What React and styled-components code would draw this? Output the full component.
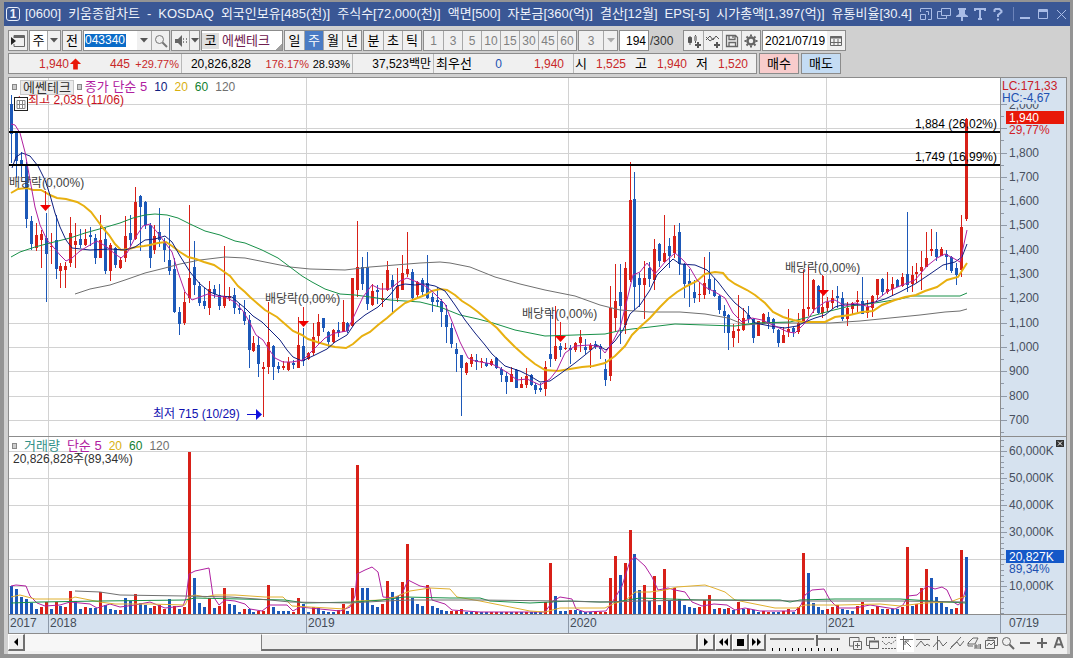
import React from 'react';
import styled, { createGlobalStyle } from 'styled-components';

const GlobalStyle = createGlobalStyle`
  * { box-sizing: border-box; }
  body { margin: 0; background: #8f8f8f; }
  body, button, input, select {
    font-family: 'Liberation Sans', 'Noto Sans CJK KR', sans-serif;
    font-size: 12px;
    line-height: 16px;
  }
`;

const RED = '#d82018';
const BLUE = '#1c58b8';

/* ---------- window shell ---------- */

const Window = styled.main`
  border: solid #949494;
  border-width: 2px 3px 4px 4px;
  background: #d0d0d0;
  overflow: hidden;
`;

const TitleBar = styled.header`
  display: flex;
  align-items: center;
  height: 24px;
  padding: 0 2px;
  background: #3a5795;
  color: #eef2fa;
`;

const ScreenNumber = styled.span`
  flex: none;
  width: 14px;
  height: 14px;
  border: 1px solid #e8eefa;
  border-radius: 3px;
  font-size: 12px;
  font-weight: bold;
  line-height: 12px;
  text-align: center;
`;

const Title = styled.h1`
  display: flex;
  flex: 1;
  gap: 7px;
  min-width: 0;
  margin: 0 0 0 5px;
  font-size: 13px;
  font-weight: normal;
  line-height: 20px;
  white-space: nowrap;
  overflow: hidden;
`;

const TitleButtons = styled.div`
  display: flex;
  flex: none;
  align-items: center;
  gap: 4px;
`;

const TitleButton = styled.button`
  display: flex;
  align-items: center;
  justify-content: center;
  width: 14px;
  height: 18px;
  padding: 0;
  border: 0;
  background: none;
  color: #a9bce6;
`;

const TitleDivider = styled.span`
  width: 1px;
  height: 14px;
  margin-left: 4px;
  background: #6d84ba;
`;

/* ---------- toolbar ---------- */

const Toolbar = styled.div`
  display: flex;
  align-items: center;
  gap: 1px;
  padding: 4px 4px 0;
`;

const Group = styled.div`
  display: flex;
  flex: none;
  height: 21px;
  border: 1px solid #8c8c8c;
  background: #f0f0f0;
`;

const Tool = styled.button`
  display: flex;
  align-items: center;
  justify-content: center;
  width: ${(p) => p.$width || 19}px;
  padding: 0;
  border: 0;
  background: ${(p) => (p.$active ? '#4a7bc4' : p.$white ? '#fff' : '#f0f0f0')};
  color: ${(p) => (p.$active ? '#fff' : p.$muted ? '#808080' : '#000')};
  font-size: ${(p) => (p.$muted ? 12 : 13)}px;

  & + & {
    border-left: 1px solid #a8a8a8;
  }
`;

const Field = styled.input`
  width: ${(p) => p.$width}px;
  padding: 0 2px;
  border: 0;
  outline: 0;
  background: #fff;
  color: #000;
  text-align: ${(p) => p.$align || 'left'};
`;

const CodeBox = styled.div`
  display: flex;
  align-items: center;
  width: 53px;
  background: #fff;
`;

const CodeField = styled.input`
  width: 41px;
  height: 13px;
  margin-left: 1px;
  padding: 0;
  border: 0;
  outline: 0;
  background: #0a6cc8;
  color: #fff;
  line-height: 13px;
`;

const StockName = styled.div`
  display: flex;
  align-items: center;
  width: 80px;
  background: linear-gradient(135deg, #fff 0 93%, #a0a0a0 93%);
  color: #702050;
  font-size: 13px;
`;

const Market = styled.span`
  width: 17px;
  margin-right: 3px;
  background: #dedede;
  color: #000;
  text-align: center;
`;

const BarTotal = styled.span`
  width: 32px;
  color: #333;
`;

/* ---------- quote line ---------- */

const QuoteRow = styled(Toolbar)`
  gap: 2px;
  padding: 2px 4px 0;
`;

const QuoteGroup = styled(Group)`
  width: 749px;
`;

const QuoteCell = styled.div`
  display: flex;
  align-items: center;
  width: ${(p) => p.$width}px;
  padding-right: 2px;

  & + & {
    border-left: 1px solid #b8b8b8;
  }
`;

const Figure = styled.span`
  flex: none;
  width: ${(p) => p.$width}px;
  color: ${(p) => p.$color || '#000'};
  font-size: ${(p) => (p.$percent ? 11 : 12)}px;
  text-align: right;
  white-space: nowrap;
`;

const QuoteLabel = styled.span`
  flex: none;
  width: ${(p) => p.$width}px;
  padding-left: ${(p) => p.$inset || 2}px;
  font-size: 13px;
`;

const OrderButton = styled.button`
  width: 40px;
  height: 21px;
  padding: 0;
  border: 1px solid #8c8c8c;
  background: ${(p) => (p.$sell ? '#c4dcf4' : '#f8cccc')};
  color: #000;
  font-size: 13px;
`;

/* ---------- chart ---------- */

const ChartFrame = styled.section`
  margin: 3px 3px 0 4px;
  border: 1px solid #8c8c8c;
  background: #fff;
`;

const ChartPanel = styled.div`
  display: grid;
  grid-template-columns: minmax(0, 1fr) 65px;
  height: ${(p) => p.$height}px;
  border-bottom: 1px solid #8c8c8c;
`;

const Plot = styled.div`
  position: relative;
  overflow: hidden;
  border-right: 1px solid #8c8c8c;

  > svg { display: block; width: 100%; height: 100%; }
`;

const Axis = styled.div`
  position: relative;
  overflow: hidden;
  background: #d6e2ef;

  > svg { display: block; }
`;

const Legend = styled.div`
  position: absolute;
  top: 1px;
  left: 3px;
  display: flex;
  align-items: center;
  gap: 7px;
`;

const LegendHead = styled.div`
  display: flex;
  align-items: center;
  gap: 3px;
`;

const LegendItem = styled.span`
  color: ${(p) => p.$color};
  font-size: ${(p) => p.$size || 12}px;
  line-height: 16px;
  white-space: nowrap;
`;

const LegendBox = styled.span`
  width: 5px;
  height: 6px;
  border: 1px solid #888;
  background: #ccc;
`;

const StockTag = styled.span`
  height: 15px;
  padding: 0 2px;
  border: 1px solid #c8c8c8;
  background: #ebebeb;
  color: #333;
  font-size: 13px;
  line-height: 13px;
`;

const ClosePanel = styled.button`
  position: absolute;
  top: 3px;
  right: 2px;
  width: 8px;
  height: 7px;
  padding: 0;
  border: 0;
  background: #333;

  svg { display: block; }
`;

const TimeAxis = styled.div`
  display: grid;
  grid-template-columns: 40px 258px 262px 258px minmax(0, 1fr) 65px;
  height: 18px;
  background: #d6e2ef;
  color: #444c58;
`;

const Year = styled.span`
  padding-left: ${(p) => p.$inset || 1}px;
  border-right: ${(p) => (p.$last ? 0 : 1)}px solid #8c98a8;
`;

/* ---------- footer ---------- */

const Footer = styled.footer`
  display: flex;
  height: 20px;
  margin: 0 3px 0 4px;
  background: #f0f0f0;
`;

const ScrollButton = styled.button`
  display: flex;
  flex: none;
  align-items: center;
  justify-content: center;
  width: 17px;
  height: 17px;
  padding: 0;
  border: solid;
  border-width: 1px 2px 2px 1px;
  border-color: #fff #707070 #707070 #fff;
  background: #f0f0f0;
`;

const Track = styled.div`
  flex: 1;
  display: flex;
  justify-content: flex-end;
  height: 17px;
  background: #f7f7f7;
`;

const Thumb = styled.div`
  width: 65%;
  border: solid;
  border-width: 1px 2px 2px 1px;
  border-color: #fff #707070 #707070 #808080;
  background: #eee;
`;

const SpeedControl = styled.div`
  flex: none;
  width: 72px;
  margin: 0 4px;

  svg { display: block; }
`;

const Speed = styled.input`
  appearance: none;
  display: block;
  width: 70px;
  height: 12px;
  margin: 0;
  background: linear-gradient(#808080, #808080) 0 4px / 100% 2px no-repeat;

  &::-webkit-slider-thumb {
    appearance: none;
    width: 4px;
    height: 11px;
    border-right: 2px solid #666;
    background: #f0f0f0;
  }
`;

const FooterTool = styled.button`
  display: flex;
  flex: none;
  align-items: center;
  justify-content: center;
  width: 17px;
  height: 18px;
  padding: 0;
  border: 0;
  background: ${(p) => (p.$active ? '#fff' : 'none')};
  color: #666;
`;

/* ---------- icons ---------- */

const Icon = ({ size = 14, children, ...rest }) => (
  <svg width={size} height={size} viewBox="0 0 14 14" fill="none" stroke="currentColor" strokeWidth="1" {...rest}>
    {children}
  </svg>
);

const DownArrow = ({ color = '#555' }) => (
  <svg width="8" height="5" viewBox="0 0 8 5"><path d="M0 0h8L4 4.500z" fill={color} /></svg>
);

const titleIcons = [
  ['화면 축소', <Icon><path d="M1.500 5V1.500h11v11H9" /><path d="M1.500 7.500h5v5h-5zM7 4.500h2.500V8" /></Icon>],
  ['화면 복사', <Icon><path d="M4.500 1.500h9v7h-9zM4 4.500H.500v7h9V9" /></Icon>],
  ['고정', <Icon fill="currentColor" stroke="none"><path d="M3 1h8v2h-1v4l3 2v1H8v4H6v-4H1V9l3-2V3H3z" /></Icon>],
  ['글꼴', <Icon strokeWidth="2"><path d="M2 4V2h10v2M7 2v10M5 12h4" /></Icon>],
  ['도움말', <Icon strokeWidth="2"><path d="M3.500 5V3l1-1h4l2 2v1L7 8v2M7 11.500v2" /></Icon>],
];

const windowIcons = [
  ['최소화', <Icon strokeWidth="2"><path d="M2 11h10" /></Icon>],
  ['최대화', <Icon><path d="M2.500 2.500h9v9h-9z" /><path d="M2 4h10" strokeWidth="2" /></Icon>],
  ['닫기', <Icon><path d="M3 3l9 9M12 3l-9 9" /></Icon>],
];

const chartIcons = [
  ['차트 추가', <Icon stroke="#555"><path d="M3 2v9M8.500 1v8" /><path d="M1.500 3.500h3v5h-3z" fill="#555" /><path d="M7.500 2.500h2v4h-2z" fill="#999" stroke="#999" /><path d="M8 11h6M11 8v6" strokeWidth="2" /></Icon>],
  ['지표 추가', <Icon stroke="#555"><path d="M0 6l4-4 3 4 3-4 3 3M0 3l4 4 4-3" /><path d="M8 11h6M11 8v6" strokeWidth="2" /></Icon>],
  ['저장', <Icon stroke="#666" strokeWidth="1.300"><path d="M1.500 1.500h9l2 2v9h-11zM4 1.500v4h6v-4M4 12.500v-4h6.500v4M8 2v2" /></Icon>],
  ['설정', <Icon stroke="#666"><circle cx="7" cy="7" r="3.500" strokeWidth="2.500" /><path d="M7 .500v2M7 11.500v2M.500 7h2M11.500 7h2M2.500 2.500l1.500 1.500M10 10l1.500 1.500M11.500 2.500L10 4M4 10l-1.500 1.500" strokeWidth="2" /></Icon>],
];

const footerIcons = [
  ['창 추가', <Icon><path d="M11 5V1.500H1.500V10H5M5.500 5.500h8v8h-8zM9.500 7v5M7 9.500h5" /></Icon>],
  ['창 겹치기', <Icon><path d="M9.500 4V1.500h-8v8H4M4.500 5.500h9v7h-9z" /><path d="M4 5.500h10" strokeWidth="2" /></Icon>],
  ['지표선', <Icon><path d="M0 1.500h14M0 12.500h14" strokeDasharray="2 1" /><path d="M0 5l4 4 3-3 2 2 5-4" strokeDasharray="2 1" /></Icon>],
  ['선택', <Icon><path d="M4.500 0v14M1 3.500h13M6 5l6 6M6 9V5h4" /></Icon>, true],
  ['수평선', <Icon><path d="M0 3.500h14M0 11l5-6 4 5 2-2 3 2" /></Icon>],
  ['수직선', <Icon><path d="M4.500 0v14M0 11l6-7 4 6 4-4" /></Icon>],
  ['추세선', <Icon><path d="M0 13L11 1M1 11l6-5 3 4 4-5" /></Icon>],
  ['전체 지우기', <Icon><path d="M1 7l5-5h5L8 8H2zM1 7v3h5M8 13V9h2v4M8 11h2M12 8v5M13.500 8v5" /></Icon>],
  ['차트 저장', <Icon><path d="M4 4V1.500h9.500v8H11M1.500 4.500h9v8h-9zM3 10l2-3 2 2 3-3M5 3l2-1 2 1 3-1" /></Icon>],
  ['돋보기', <Icon><circle cx="5.500" cy="5.500" r="4" /><path d="M8.500 8.500l4.500 4.500" strokeWidth="2" /></Icon>],
  ['축소', <Icon strokeWidth="2"><path d="M2 7h10" /></Icon>],
  ['확대', <Icon strokeWidth="2"><path d="M2 7h10M7 2v10" /></Icon>],
  ['글자', <Icon strokeWidth="2"><path d="M2.500 12L6 2h1.500L11 12M4 8.500h6" /></Icon>],
];

/* ---------- chart data ---------- */

/* Weekly candles: high, body top, body bottom, low, direction (1 up, 0 down). */
const candles = [
  [95,104,134,163,0],[132,132,161,178,0],[152,160,165,177,0],[162,164,219,228,0],[216,221,244,250,0],[223,235,248,251,1],[230,234,240,268,1],[213,238,254,302,0],[233,246,247,264,1],[215,240,269,279,0],
  [263,266,271,288,1],[262,266,270,288,1],[217,233,263,267,1],[223,241,245,268,1],[229,239,245,248,0],[229,239,245,246,1],[227,235,237,246,0],[234,238,258,264,0],[215,240,258,258,1],[228,239,271,274,0],
  [243,245,271,281,1],[247,248,265,268,0],[257,260,268,269,1],[216,236,258,262,1],[215,233,240,247,0],[187,202,239,240,1],[195,196,207,251,0],[201,202,225,229,0],[223,225,258,268,0],[225,236,250,254,1],
  [208,232,240,247,0],[238,242,250,262,0],[218,260,271,275,0],[258,269,312,313,0],[307,312,324,335,0],[292,302,323,325,1],[205,278,298,303,1],[241,267,285,295,0],[282,286,303,306,0],[288,301,306,309,0],
  [281,289,308,315,1],[285,289,294,298,0],[284,295,306,310,0],[246,296,306,308,1],[287,296,298,301,1],[288,295,308,314,0],[303,308,310,314,0],[300,312,321,325,0],[315,320,350,368,0],[336,343,351,352,1],
  [336,345,364,377,0],[362,367,369,417,1],[302,342,367,374,1],[345,346,367,380,0],[362,366,369,373,0],[361,366,368,370,1],[357,362,370,371,1],[360,363,365,369,0],[317,345,368,368,1],[328,346,361,366,0],
  [352,353,359,360,1],[323,337,353,356,1],[314,322,336,344,1],[318,318,328,332,0],[331,332,342,347,0],[329,330,342,343,1],[322,330,333,337,0],[300,322,332,332,1],[322,323,331,333,0],[278,278,326,327,1],
  [221,267,290,297,1],[257,267,284,290,0],[252,267,304,310,0],[284,291,305,306,1],[285,290,292,304,0],[283,298,300,307,1],[261,270,290,291,1],[275,280,287,312,0],[268,286,298,302,1],[255,273,290,290,1],
  [232,269,274,277,1],[269,272,298,302,0],[281,282,295,298,1],[278,280,292,295,0],[255,283,298,299,0],[293,297,302,312,0],[287,300,302,307,0],[299,301,312,327,0],[305,315,327,343,0],[323,328,344,348,0],
  [343,349,354,372,0],[355,355,368,416,0],[362,363,373,375,1],[354,357,364,367,1],[354,360,362,370,0],[358,361,362,368,1],[358,363,366,367,0],[359,361,365,366,1],[357,358,368,369,0],[367,369,375,382,0],
  [372,376,382,394,0],[367,374,382,382,1],[369,370,388,388,0],[377,384,388,388,1],[368,376,385,388,1],[374,375,385,386,0],[383,385,390,394,0],[383,388,390,392,0],[361,367,389,396,1],[310,354,359,367,0],
  [306,346,359,361,1],[343,346,350,357,0],[343,348,349,350,1],[345,348,350,364,0],[342,343,350,352,1],[330,337,343,352,1],[339,347,350,354,0],[343,345,350,368,1],[341,344,347,349,0],[344,346,349,359,0],
  [359,369,380,386,0],[286,308,376,381,1],[264,301,318,331,1],[264,292,306,344,0],[262,268,325,334,1],[162,200,280,282,1],[172,199,287,310,0],[273,278,285,307,0],[261,278,285,319,1],[262,268,279,287,0],
  [239,249,280,290,1],[243,244,261,267,0],[215,253,262,263,1],[238,246,256,268,0],[225,236,253,258,1],[223,232,264,275,0],[263,264,284,298,0],[269,281,284,307,0],[280,292,298,303,0],[282,294,295,302,1],
  [257,283,295,299,1],[252,279,290,294,0],[278,290,296,297,0],[295,296,310,314,0],[305,311,316,333,0],[314,315,333,350,0],[324,331,338,347,1],[295,329,331,343,1],[308,318,330,331,1],[306,315,319,323,0],
  [318,319,338,343,0],[321,321,336,336,1],[313,314,324,324,1],[312,317,324,329,0],[318,319,329,333,0],[329,330,343,347,0],[327,335,343,343,1],[309,329,332,337,1],[327,328,332,337,0],[313,323,332,334,1],
  [270,309,323,323,1],[267,307,309,316,1],[279,280,309,313,1],[285,286,313,314,0],[275,307,313,318,1],[297,302,308,312,1],[290,298,303,309,1],[286,296,298,308,0],[292,298,319,321,0],[302,308,319,326,1],
  [302,303,309,314,1],[291,300,302,312,1],[277,301,314,314,0],[300,307,313,318,1],[295,296,308,317,1],[279,279,295,299,1],[278,279,292,296,0],[272,289,292,294,1],[277,284,289,296,1],[279,280,287,287,0],
  [273,277,286,287,1],[212,274,285,292,0],[266,275,284,292,1],[263,272,274,283,1],[251,267,271,290,1],[232,258,267,267,1],[229,249,251,256,1],[232,249,257,261,0],[247,249,256,256,1],[250,254,257,270,0],
  [256,257,271,273,0],[263,268,275,285,0],[215,227,270,277,1],[118,119,219,221,1],
];

/* Top of each volume bar; every bar stands on 614. Negative marks a falling week. */
const volumes = [
  -586,-589,-597,-599,-603,-609,607,602,-609,602,-606,607,591,-601,-609,607,-608,-608,592,-605,-609,-610,610,-598,-601,594,-603,-605,-608,606,
  605,609,-599,606,-609,607,452,-578,-603,-607,598,-608,606,588,-604,-605,-612,609,-609,-612,611,611,585,-607,-611,-611,-611,612,598,-604,
  -612,607,-608,-611,-612,-612,610,604,-611,588,465,-588,-588,-605,-607,604,581,-592,-596,582,544,-598,-604,-606,585,-606,-608,-610,-611,611,
  611,609,-612,-612,612,-612,-612,612,612,-612,612,-612,612,-612,612,-612,-612,-612,602,563,-596,-611,-611,610,-610,-611,-612,-612,612,612,
  612,578,556,-575,563,530,-554,-590,585,-601,576,-605,569,-600,588,-599,-605,-607,-608,607,600,595,-609,608,-609,608,-610,602,-609,609,
  -610,-612,611,612,-612,-612,611,609,-612,607,553,-573,-603,-607,-610,609,607,605,-609,-610,-611,606,602,-610,609,606,-609,609,-609,-609,
  607,547,-606,604,588,569,-578,-597,-602,-607,-609,608,550,-557,
].map((v) => [Math.abs(v), v > 0]);

const priceLines = [
  { color: '#707070', width: 1, points: '75,294 90,289 110,285 125,280 145,273 165,268 180,264 200,260 225,257 245,258 265,262 290,267 310,269 345,270 370,267 395,265 420,263 440,262 450,263 470,267 485,273 495,277 520,284 545,290 575,296 600,305 620,310 650,312 680,312 705,314 728,318 745,325 770,323 800,323 830,323 860,321 890,318 920,315 945,312 960,311 967,309' },
  { color: '#189048', width: 1, points: '11,257 20,252 35,247 50,243 70,238 85,233 103,228 120,223 133,218 145,215 155,214 167,215 178,218 190,224 205,231 220,235 235,241 245,243 262,250 278,258 290,267 302,276 312,282 325,289 340,294 355,295 370,297 390,300 420,302 440,307 460,315 478,319 493,323 515,330 545,336 575,335 605,334 618,331 632,329 650,327 675,324 705,325 735,326 755,323 790,322 805,318 830,311 850,306 875,303 900,299 912,296 930,296 960,296 967,293' },
  { color: '#e8b010', width: 2, points: '11,193 18,189 27,188 33,190 41,190 50,195 57,198 66,199 77,202 84,206 91,212 97,220 103,228 109,235 115,244 121,250 129,249 136,247 144,246 150,245 158,243 166,242 172,246 180,252 188,257 196,259 204,262 214,265 223,271 230,276 238,286 245,292 250,297 258,304 265,310 277,317 285,324 293,331 302,335 308,339 317,342 327,345 335,347 346,348 353,344 362,336 370,332 378,325 387,318 395,311 405,303 415,299 425,295 432,291 440,289 447,290 455,295 462,301 470,306 478,312 485,318 491,323 497,328 505,337 515,347 525,356 535,364 545,370 558,371 570,369 582,367 593,366 605,363 615,356 625,346 632,335 640,327 650,318 660,307 668,299 677,292 687,286 697,281 705,274 715,272 723,273 728,279 735,284 747,290 755,295 765,303 773,312 783,317 793,320 803,322 825,322 835,317 850,315 862,312 873,311 882,305 895,300 905,297 916,295 925,291 937,287 947,280 958,277 967,263' },
  { color: '#102080', width: 1, points: '12,168 16,157 22,153 30,156 38,166 45,180 50,195 55,213 60,227 66,240 72,248 90,250 110,249 125,250 135,247 145,240 155,239 165,236 172,242 180,256 190,272 200,284 210,292 220,296 232,297 240,304 245,308 253,316 262,322 270,330 280,340 287,350 293,357 302,361 315,355 327,349 335,342 347,335 355,323 365,315 378,307 390,295 397,286 405,284 415,285 425,284 435,286 445,291 455,305 465,320 475,333 485,345 492,354 505,366 520,371 530,376 540,382 550,381 560,374 575,363 585,355 597,345 606,350 615,341 623,330 630,314 640,305 650,290 657,275 668,264 673,259 680,264 695,265 707,270 718,282 728,295 735,303 745,311 755,323 770,326 785,328 797,326 805,322 815,318 825,315 835,307 845,304 860,305 875,302 885,299 900,292 915,284 930,274 943,265 955,262 962,257 967,244' },
  { color: '#b020a0', width: 1, points: '11,124 15,125 20,133 25,152 30,180 35,207 40,225 47,240 55,249 60,255 66,261 72,258 80,251 90,245 97,241 107,247 115,254 121,258 127,253 135,238 143,226 150,224 157,232 163,240 172,252 178,272 185,292 192,300 200,297 208,294 215,296 225,297 235,302 243,311 250,323 256,335 263,340 268,348 275,358 283,362 292,362 303,360 313,350 325,338 335,333 347,331 355,314 363,297 372,285 380,289 390,289 400,281 407,278 417,282 427,287 435,294 445,304 453,324 460,342 468,358 475,361 492,364 500,368 508,373 517,380 527,379 540,385 550,379 557,370 565,353 575,346 590,345 600,347 605,353 612,343 620,328 627,300 633,275 640,272 647,263 655,274 665,262 675,253 683,260 690,268 697,280 705,287 715,292 725,298 733,313 742,322 752,318 762,320 775,326 788,332 795,333 805,323 815,309 825,302 835,300 845,306 855,303 870,307 878,299 888,291 900,286 915,280 927,266 937,258 945,254 953,258 960,262 967,230' },
];

const volumeLines = [
  { color: '#b020a0', width: 1, points: '11,586 16,585 26,586 30,596 37,603 45,606 60,605 70,602 80,603 90,604 97,608 110,604 120,607 135,605 150,602 165,608 183,606 186,598 189,574 195,571 209,568 213,596 219,605 225,600 235,601 245,604 250,609 262,611 270,605 287,605 293,611 300,607 320,609 340,611 350,607 355,596 357,574 365,570 372,567 378,572 383,597 395,598 402,594 408,580 420,586 430,588 432,600 445,604 452,610 480,612 545,612 553,601 560,597 572,599 576,609 585,612 606,611 615,598 622,586 630,561 635,557 645,566 652,577 658,590 668,588 675,590 685,592 692,602 702,606 714,604 727,605 735,610 745,608 760,611 795,611 801,605 805,595 812,590 824,589 830,600 838,608 855,608 870,605 895,609 903,605 908,596 917,595 927,586 935,589 942,587 947,590 952,601 958,605 962,602 966,588' },
  { color: '#e0b030', width: 1, points: '11,597 20,595 35,599 70,599 75,597 100,602 115,604 150,604 185,605 189,597 195,595 205,597 215,595 235,595 265,597 283,597 292,606 310,607 345,609 355,601 382,600 395,597 410,591 430,588 450,589 457,597 480,601 505,606 530,611 545,612 560,608 605,608 615,603 625,601 635,592 650,592 665,590 677,587 705,585 714,588 725,592 735,600 750,603 775,608 797,608 805,605 840,605 880,604 900,606 925,603 950,602 966,596' },
  { color: '#189048', width: 1, points: '11,603 40,602 100,601 185,600 195,598 240,599 285,600 305,603 355,602 382,600 405,597 450,598 480,598 490,601 530,603 570,601 600,602 615,602 640,598 700,600 780,600 790,602 800,600 835,599 900,599 930,601 966,603' },
  { color: '#707070', width: 1, points: '75,591 100,592 120,595 185,596 230,597 270,600 290,602 350,603 385,601 410,600 480,600 560,601 600,602 640,601 700,600 800,601 900,601 966,602' },
];

const dividends = [
  { x: 45, textX: 9, y: 187, arrow: 210 },
  { x: 303, textX: 265, y: 303, arrow: 326 },
  { x: 560, textX: 522, y: 318, arrow: 341 },
  { x: 823, textX: 785, y: 272, arrow: 295 },
];

const supports = [
  { y: 131, label: '1,884 (26,02%)' },
  { y: 164, label: '1,749 (16,99%)' },
];

const priceGrid = [104, 128, 153, 177, 201, 225, 250, 274, 298, 323, 347, 371, 396, 420];
const volumeGrid = [451, 478, 505, 532, 559, 586];
const yearX = [48, 306, 568, 826];
const weekX = (i) => Math.round(11 + i * 4.948);

const Grid = ({ rows }) => (
  <g stroke="#d2d2d2" shapeRendering="crispEdges">
    {rows.map((y) => <line key={y} x1="0" x2="102%" y1={y + 0.5} y2={y + 0.5} />)}
    {yearX.map((x) => <line key={x} x1={x + 0.5} x2={x + 0.5} y1="0" y2="640" />)}
  </g>
);

const Averages = ({ lines }) =>
  lines.map((l) => (
    <polyline key={l.color} points={l.points} fill="none" stroke={l.color} strokeWidth={l.width} />
  ));

function PriceChart() {
  return (
    <svg role="img" aria-label="주가 차트" fontSize="12">
      <g transform="translate(-9 -78)">
        <Grid rows={priceGrid} />
        <g shapeRendering="crispEdges">
          {candles.map(([high, top, bottom, low, up], i) => (
            <g key={i} fill={up ? RED : BLUE}>
              <rect x={weekX(i)} y={high} width="1" height={low - high} />
              <rect x={weekX(i) - 1} y={top} width="3" height={Math.max(bottom - top, 1)} />
            </g>
          ))}
        </g>
        <Averages lines={priceLines} />
        {supports.map((s) => (
          <g key={s.y}>
            <rect x="9" y={s.y} width="991" height="2" />
            <text x="997" y={s.y - 3} textAnchor="end">{s.label}</text>
          </g>
        ))}
        {dividends.map((d) => (
          <g key={d.x}>
            <path d={`M${d.x + 0.5} ${d.arrow - 19}v14`} stroke="#e02020" />
            <path d={`M${d.x - 5} ${d.arrow - 5}h11l-5.500 6z`} fill="#f00000" />
            <text x={d.textX} y={d.y} fill="#404040">배당락(0,00%)</text>
          </g>
        ))}
        <path d="M15 99l5-3v6z" fill="#d01020" />
        <text x="28" y="104" fill="#c81020">최고 2,035 (11/06)</text>
        <path d="M247 414.500h9" stroke="#1010d0" />
        <path d="M256 409v11l6-5.500z" fill="#1010e0" />
        <text x="153" y="418" fill="#1010b0">최저 715 (10/29)</text>
        <g stroke="#222" fill="#fff">
          <rect x="14.500" y="97.500" width="13" height="13" />
          <path d="M17 100.500h8v8h-8zM17 104.500h8M19.500 101v7M22.500 101v7" stroke="#888" />
        </g>
      </g>
    </svg>
  );
}

function PriceAxis() {
  return (
    <svg width="65" height="358" fontSize="12" fill="#485060">
      <g transform="translate(-1002 -78)">
        {priceGrid.map((y, i) => (
          <g key={y}>
            <path d={`M1002 ${y + 0.5}h6M1002 ${y + 12.5}h3`} stroke="#909aa8" />
            {i !== 1 && <text x="1010" y={y + (i ? 4 : 5)}>{(2000 - i * 100).toLocaleString('en-US')}</text>}
          </g>
        ))}
        <rect x="1002" y="79" width="64" height="25" fill="#d6e2ef" />
        <text x="1003" y="90" fill="#c82028">LC:171,33</text>
        <text x="1003" y="102" fill="#2050b0">HC:-4,67</text>
        <rect x="1007" y="111" width="58" height="13" fill="#e81808" />
        <text x="1010" y="122" fill="#fff">1,940</text>
        <text x="1010" y="134" fill="#d02028">29,77%</text>
      </g>
    </svg>
  );
}

function VolumeChart() {
  return (
    <svg role="img" aria-label="거래량 차트" fontSize="12">
      <g transform="translate(-9 -437)">
        <Grid rows={volumeGrid} />
        <g shapeRendering="crispEdges">
          {volumes.map(([top, up], i) => (
            <rect key={i} x={weekX(i) - 1} y={top} width="3" height={614 - top} fill={up ? RED : BLUE} />
          ))}
        </g>
        <Averages lines={volumeLines} />
        <text x="13" y="463" fill="#303030">20,826,828주(89,34%)</text>
      </g>
    </svg>
  );
}

function VolumeAxis() {
  const ticks = Array.from({ length: 33 }, (_, i) => 613 - i * 5.4);
  return (
    <svg width="65" height="177" fontSize="12" fill="#485060">
      <g transform="translate(-1002 -437)">
        {ticks.map((y) => <path key={y} d={`M1002 ${Math.round(y) + 0.5}h3`} stroke="#909aa8" />)}
        {volumeGrid.map((y, i) => (
          <g key={y}>
            <path d={`M1002 ${y + 0.5}h6`} stroke="#909aa8" />
            {i !== 4 && <text x="1010" y={y + 4}>{60 - i * 10},000K</text>}
          </g>
        ))}
        <rect x="1007" y="550" width="58" height="13" fill="#1458c8" />
        <text x="1010" y="561" fill="#fff">20,827K</text>
        <text x="1010" y="573" fill="#2050b0">89,34%</text>
      </g>
    </svg>
  );
}

const titleParts = [
  '[0600]', '키움종합차트', '-', 'KOSDAQ', '외국인보유[485(천)]', '주식수[72,000(천)]', '액면[500]',
  '자본금[360(억)]', '결산[12월]', 'EPS[-5]', '시가총액[1,397(억)]', '유통비율[30.4]',
];

const Periods = ({ items, active, muted }) => (
  <Group>
    {items.map((t) => <Tool key={t} type="button" $active={t === active} $muted={muted}>{t}</Tool>)}
  </Group>
);

export default function App() {
  return (
    <>
      <GlobalStyle />
      <Window>
        <TitleBar>
          <ScreenNumber>1</ScreenNumber>
          <Title>{titleParts.map((part) => <span key={part}>{part}</span>)}</Title>
          <TitleButtons>
            {titleIcons.map(([label, icon]) => <TitleButton key={label} type="button" aria-label={label}>{icon}</TitleButton>)}
            <TitleDivider />
            {windowIcons.map(([label, icon]) => <TitleButton key={label} type="button" aria-label={label}>{icon}</TitleButton>)}
          </TitleButtons>
        </TitleBar>

        <Toolbar>
          <Group>
            <Tool type="button" aria-label="패널 열기" $width={18}>
              <Icon><path d="M3 4V1.500h10.500v11H3V10" stroke="#666" /><path d="M3 3h10" strokeWidth="2" stroke="#666" /><path d="M0 3l5 4-5 4z" fill="#222" stroke="none" /></Icon>
            </Tool>
          </Group>
          <Group>
            <Tool type="button" $white $width={17}>주</Tool>
            <Tool type="button" aria-label="주기 선택" $width={13}><DownArrow /></Tool>
          </Group>
          <Group><Tool type="button" $width={18}>전</Tool></Group>
          <Group>
            <CodeBox><CodeField aria-label="종목코드" defaultValue="043340" /></CodeBox>
            <Tool type="button" aria-label="최근 종목" $width={14}><DownArrow /></Tool>
            <Tool type="button" aria-label="종목 검색" $width={18}>
              <Icon stroke="#777"><circle cx="5.500" cy="5.500" r="4" /><path d="M8.500 8.500l4.500 4.500" strokeWidth="2" /></Icon>
            </Tool>
          </Group>
          <Group>
            <Tool type="button" aria-label="소리" $width={17}>
              <Icon><path d="M1 5h3l4-4v12L4 9H1z" fill="#666" stroke="none" /><path d="M9.500 4v6M12.500 4v6" strokeDasharray="2 1" stroke="#888" /></Icon>
            </Tool>
            <Tool type="button" aria-label="소리 설정" $width={10}><DownArrow /></Tool>
          </Group>
          <Group><StockName><Market>코</Market>에쎈테크</StockName></Group>
          <Periods items={['일', '주', '월', '년']} active="주" />
          <Periods items={['분', '초', '틱']} />
          <Periods items={['1', '3', '5', '10', '15', '30', '45', '60']} muted />
          <Group>
            <Tool type="button" $muted $width={24}>3</Tool>
            <Tool type="button" aria-label="틱 선택" $width={14}><DownArrow color="#aaa" /></Tool>
          </Group>
          <Group><Field aria-label="봉 개수" defaultValue="194" $width={28} $align="right" /></Group>
          <BarTotal>/300</BarTotal>
          <Group>
            {chartIcons.map(([label, icon]) => <Tool key={label} type="button" aria-label={label} $muted>{icon}</Tool>)}
          </Group>
          <Group>
            <Field aria-label="기준일" defaultValue="2021/07/19" $width={64} />
            <Tool type="button" aria-label="달력" $muted $width={18}>
              <Icon stroke="#666"><path d="M1.500 2.500h11v9h-11zM5 5v7M9 5v7M2 8.500h10" /><path d="M1 3.500h12" strokeWidth="2" /></Icon>
            </Tool>
          </Group>
        </Toolbar>

        <QuoteRow>
          <QuoteGroup>
            <QuoteCell $width={172}>
              <Figure $width={60} $color="#c82828">1,940</Figure>
              <svg width="14" height="14" viewBox="0 0 14 14"><path d="M7 1l6 6H9.500v6h-5V7H1z" fill="#e81808" /></svg>
              <Figure $width={48} $color="#c82828">445</Figure>
              <Figure $width={49} $color="#c82828" $percent>+29.77%</Figure>
            </QuoteCell>
            <QuoteCell $width={171}>
              <Figure $width={69}>20,826,828</Figure>
              <Figure $width={58} $color="#c82828" $percent>176.17%</Figure>
              <Figure $width={41} $percent>28.93%</Figure>
            </QuoteCell>
            <QuoteCell $width={81}><Figure $width={78}>37,523백만</Figure></QuoteCell>
            <QuoteCell $width={140}>
              <QuoteLabel $width={50}>최우선</QuoteLabel>
              <Figure $width={18} $color="#2050b0">0</Figure>
              <Figure $width={62} $color="#c82828">1,940</Figure>
            </QuoteCell>
            <QuoteCell $width={183}>
              <QuoteLabel $width={17} $inset={1}>시</QuoteLabel>
              <Figure $width={35} $color="#c82828">1,525</Figure>
              <QuoteLabel $width={26} $inset={9}>고</QuoteLabel>
              <Figure $width={35} $color="#c82828">1,940</Figure>
              <QuoteLabel $width={26} $inset={9}>저</QuoteLabel>
              <Figure $width={35} $color="#c82828">1,520</Figure>
            </QuoteCell>
          </QuoteGroup>
          <OrderButton type="button">매수</OrderButton>
          <OrderButton type="button" $sell>매도</OrderButton>
        </QuoteRow>

        <ChartFrame>
          <ChartPanel $height={359}>
            <Plot>
              <PriceChart />
              <Legend>
                <LegendHead>
                  <LegendBox />
                  <StockTag>에쎈테크</StockTag>
                  <LegendBox />
                  <LegendItem $color="#b020a0" $size={13}>종가 단순 5</LegendItem>
                </LegendHead>
                <LegendItem $color="#102080">10</LegendItem>
                <LegendItem $color="#d8b010">20</LegendItem>
                <LegendItem $color="#108030">60</LegendItem>
                <LegendItem $color="#707070">120</LegendItem>
              </Legend>
            </Plot>
            <Axis><PriceAxis /></Axis>
          </ChartPanel>
          <ChartPanel $height={178}>
            <Plot>
              <VolumeChart />
              <Legend>
                <LegendBox />
                <LegendItem $color="#309088" $size={13}>거래량</LegendItem>
                <LegendItem $color="#b020a0" $size={13}>단순 5</LegendItem>
                <LegendItem $color="#d8b010">20</LegendItem>
                <LegendItem $color="#108030">60</LegendItem>
                <LegendItem $color="#707070">120</LegendItem>
              </Legend>
            </Plot>
            <Axis>
              <VolumeAxis />
              <ClosePanel type="button" aria-label="거래량 닫기">
                <svg width="8" height="7"><path d="M2 1.500l4 4M6 1.500l-4 4" stroke="#fff" /></svg>
              </ClosePanel>
            </Axis>
          </ChartPanel>
          <TimeAxis>
            <Year>2017</Year>
            <Year>2018</Year>
            <Year>2019</Year>
            <Year>2020</Year>
            <Year>2021</Year>
            <Year $inset={8} $last>07/19</Year>
          </TimeAxis>
        </ChartFrame>

        <Footer>
          <ScrollButton type="button" aria-label="왼쪽으로"><svg width="6" height="8"><path d="M5 0v8L1 4z" /></svg></ScrollButton>
          <Track><Thumb /></Track>
          <ScrollButton type="button" aria-label="오른쪽으로"><svg width="6" height="8"><path d="M1 0v8l4-4z" /></svg></ScrollButton>
          <ScrollButton type="button" aria-label="뒤로"><svg width="10" height="8"><path d="M5 0v8L1 4zM10 0v8L6 4z" /></svg></ScrollButton>
          <ScrollButton type="button" aria-label="정지"><svg width="7" height="7"><path d="M0 0h7v7H0z" /></svg></ScrollButton>
          <ScrollButton type="button" aria-label="앞으로"><svg width="10" height="8"><path d="M0 0v8l4-4zM5 0v8l4-4z" /></svg></ScrollButton>
          <SpeedControl>
            <Speed type="range" aria-label="속도" defaultValue="67" />
            <svg width="72" height="5" shapeRendering="crispEdges">
              {Array.from({ length: 11 }, (_, i) => <rect key={i} x={2 + Math.round(i * 6.5)} y="2" width="1" height="3" />)}
            </svg>
          </SpeedControl>
          {footerIcons.map(([label, icon, active]) => (
            <FooterTool key={label} type="button" aria-label={label} $active={active}>{icon}</FooterTool>
          ))}
        </Footer>
      </Window>
    </>
  );
}
